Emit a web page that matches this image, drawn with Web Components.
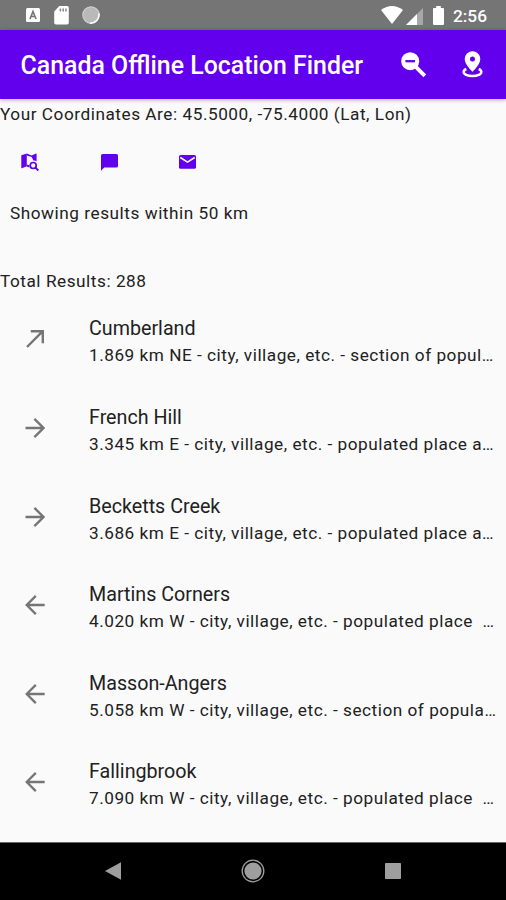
<!DOCTYPE html>
<html lang="en">
<head>
<meta charset="utf-8">
<title>Canada Offline Location Finder</title>
<style>
html, body { margin: 0; height: 100%; overflow: hidden; }
body { font-family: Roboto, "Noto Sans", sans-serif; color: #212121; background: #fafafa; }
</style>
</head>
<body>
<finder-app></finder-app>
<script>
const define = (name, html, setup) => customElements.define(name, class extends HTMLElement {
  constructor() {
    super();
    const t = document.createElement('template');
    t.innerHTML = html;
    this.attachShadow({ mode: 'open' }).append(t.content.cloneNode(true));
  }
  connectedCallback() { if (setup) setup(this); }
});

const glyphs = {
  keyboard: ['0 0 14 14', '<rect width="14" height="14" rx="1.5"/><path d="M4 11 7 3.5 10 11M5.2 8.5h3.6" fill="none" stroke="#757575" stroke-width="1.6"/>'],
  sdcard: ['0 0 15 19', '<path d="M5.3 0H13a1.8 1.8 0 0 1 1.8 1.8v15A1.8 1.8 0 0 1 13 18.6H2a1.8 1.8 0 0 1-1.8-1.8V5.5Z"/><path d="M5.6 2.6h1.6v3H5.6zM8.4 2.6H10v3H8.4zM11.2 2.6h1.5v3h-1.5z" fill="#8a8a8a"/>'],
  sync: ['0 0 18 18', '<circle cx="9" cy="9" r="8.2" fill="#b9b9b9" stroke="#cecece" stroke-width="1.2"/><path d="M16.8 7.5A8.3 8.3 0 0 1 7.8 17.2" fill="none" stroke="#fff" stroke-width="1.5"/>'],
  wifi: ['0 0 22 18', '<path d="M11 18 0 4Q11-3.8 22 4Z"/>'],
  signal: ['0 0 17 17', '<path d="M0 17 17 0v17Z" fill="#a8a8a8"/><path d="M0 17 11 6v11Z"/>'],
  battery: ['0 0 11 19', '<path d="M3.2 0h4.6v2H10q1 0 1 1v15q0 1-1 1H1q-1 0-1-1V3q0-1 1-1h2.2Z"/>'],
  zoomout: ['0 0 26 26', '<circle cx="9.2" cy="9.2" r="9"/><path d="m14.8 14.8 9 9" stroke="currentColor" stroke-width="3.9"/><path d="M4.4 9.2h9.6" stroke="#6200ee" stroke-width="2.3"/>'],
  pin: ['0 0 22 27', '<path fill-rule="evenodd" d="M10.5.3a7.8 7.8 0 0 1 7.8 7.8c0 5.8-7.8 12.7-7.8 12.7S2.7 13.9 2.7 8.1A7.8 7.8 0 0 1 10.5.3Zm0 5.3a2.5 2.5 0 1 0 0 5 2.5 2.5 0 0 0 0-5Z"/><path d="M4.3 18C2.4 18.8 1.7 19.6 1.7 20.9c0 2.4 3.8 4.2 8.8 4.2s8.8-1.8 8.8-4.2c0-1.3-.7-2.1-2.6-2.9" fill="none" stroke="currentColor" stroke-width="2.5"/>'],
  map: ['0 0 18 18', '<path d="M.3 2.2 5.8.6v12.6L.9 15.2q-.6.1-.6-.5Z"/><path d="m5.8.6 4.9 1.8L15 .6q.6-.1.6.5v7.1a5 5 0 0 0-3.2-.7L10.7 4 5.8 2.4ZM5.8 11.4l2.4.8.2 2.2-2.6-1Z"/><circle cx="12.2" cy="12.5" r="3" fill="none" stroke="currentColor" stroke-width="1.7"/><path d="m14.3 14.5 3 3" stroke="currentColor" stroke-width="1.9"/>'],
  chat: ['0 0 17 17', '<path d="M1.6 0h13.8Q17 0 17 1.6v10.3q0 1.6-1.6 1.6H3.3L0 16.7V1.6Q0 0 1.6 0Z"/>'],
  mail: ['0 0 17 14', '<path d="M1.6 0h13.8Q17 0 17 1.6v10.6q0 1.6-1.6 1.6H1.6Q0 13.8 0 12.2V1.6Q0 0 1.6 0Z"/><path d="m1.3 2.5 7.2 4.6 7.2-4.6" fill="none" stroke="#fafafa" stroke-width="1.7"/>'],
  ne: ['0 0 20 20', '<path d="M2 18 17.3 2.7M5.8 2.2h12v12" fill="none" stroke="currentColor" stroke-width="2.4"/>'],
  e: ['0 0 20 20', '<path d="M.5 10h18M9.4.9l9.1 9.1-9.1 9.1" fill="none" stroke="currentColor" stroke-width="2.3"/>'],
  w: ['0 0 20 20', '<path d="M19.7 10H1.7M10.8.9 1.7 10l9.1 9.1" fill="none" stroke="currentColor" stroke-width="2.3"/>'],
  back: ['0 0 16 18', '<path d="M0 9 16 .3v17.4Z"/>'],
  home: ['0 0 24 24', '<circle cx="12" cy="12" r="10.8" fill="none" stroke="currentColor" stroke-width="1.3"/><circle cx="12" cy="12" r="8.6"/>'],
  recent: ['0 0 16 16', '<rect width="16" height="16" rx=".7"/>']
};

define('ui-icon', `<style>:host{display:block;flex:none}svg{display:block;fill:currentColor}</style><div></div>`, el => {
  const [box, body] = glyphs[el.getAttribute('name')];
  const [, , w, h] = box.split(' ');
  el.shadowRoot.querySelector('div').innerHTML = `<svg width="${w}" height="${h}" viewBox="${box}">${body}</svg>`;
});

define('status-bar', `<style>
:host{display:flex;align-items:center;height:30px;padding:0 19px 0 26px;background:#757575;color:#fff;box-sizing:border-box}
.sd{margin-left:14px}.sync{margin-left:13px}.wifi{margin-left:auto}.sig{margin:3px 0 0 3px}.bat{margin-left:10px}
span{font-size:17.3px;font-weight:500;margin:2px 0 0 9px;line-height:20px}
</style><ui-icon name="keyboard"></ui-icon><ui-icon class="sd" name="sdcard"></ui-icon><ui-icon class="sync" name="sync"></ui-icon>
<ui-icon class="wifi" name="wifi"></ui-icon><ui-icon class="sig" name="signal"></ui-icon><ui-icon class="bat" name="battery"></ui-icon><span>2:56</span>`);

define('app-bar', `<style>
:host{display:flex;align-items:center;height:69px;padding:0 22px 0 20.5px;background:#6200ee;color:#fff;box-sizing:border-box;box-shadow:0 1px 4px rgba(0,0,0,.3);position:relative}
h1{font-size:24.9px;font-weight:500;margin:3px auto 0 0;line-height:30px;white-space:nowrap}
.p{margin-left:35px}
</style><h1><slot></slot></h1><ui-icon name="zoomout"></ui-icon><ui-icon class="p" name="pin"></ui-icon>`);

define('info-line', `<style>
:host{display:block;font-size:17.2px;line-height:20px;letter-spacing:.54px;white-space:nowrap}
</style><slot></slot>`);

define('share-actions', `<style>
:host{display:flex;align-items:center;height:18px;padding-left:21px;color:#6200ee;gap:61.5px}
</style><ui-icon name="map"></ui-icon><ui-icon name="chat"></ui-icon><ui-icon name="mail"></ui-icon>`);

define('place-row', `<style>
:host{display:flex;height:88.6px;box-sizing:border-box}
ui-icon{color:#757575;margin:25px 44px 0 25px}
.n{font-size:19.7px;line-height:24px;margin-top:13px;letter-spacing:0}
.d{font-size:17.2px;line-height:22px;margin-top:3px;letter-spacing:.52px;white-space:pre}
</style><div><div class="n"><slot name="title"></slot></div><div class="d"><slot></slot></div></div>`, el => {
  const icon = document.createElement('ui-icon');
  icon.setAttribute('name', el.getAttribute('direction'));
  el.shadowRoot.querySelector('style').after(icon);
});

define('nav-bar', `<style>
:host{display:flex;align-items:center;height:58.5px;background:#000;color:#9e9e9e;border-top:1px solid #666;box-sizing:border-box;padding:0 105px;justify-content:space-between}
</style><ui-icon name="back"></ui-icon><ui-icon name="home"></ui-icon><ui-icon name="recent"></ui-icon>`);

const rows = [
  ['ne', 'Cumberland', '1.869 km NE - city, village, etc. - section of popul…'],
  ['e', 'French Hill', '3.345 km E - city, village, etc. - populated place a…'],
  ['e', 'Becketts Creek', '3.686 km E - city, village, etc. - populated place a…'],
  ['w', 'Martins Corners', '4.020 km W - city, village, etc. - populated place  …'],
  ['w', 'Masson-Angers', '5.058 km W - city, village, etc. - section of popula…'],
  ['w', 'Fallingbrook', '7.090 km W - city, village, etc. - populated place  …']
];

define('finder-app', `<style>
:host{display:flex;flex-direction:column;height:900px;overflow:hidden}
main{flex:1;min-height:0;overflow:hidden;padding-top:5px}
share-actions{margin-top:29px}.range{margin:32px 0 0 10px}.total{margin-top:48px}.list{margin-top:13.35px}
</style><status-bar></status-bar><app-bar>Canada Offline Location Finder</app-bar>
<main><info-line>Your Coordinates Are: 45.5000, -75.4000 (Lat, Lon)</info-line>
<share-actions></share-actions>
<info-line class="range">Showing results within 50 km</info-line>
<info-line class="total">Total Results: 288</info-line>
<div class="list">${rows.map(([dir, n, d]) => `<place-row direction="${dir}"><span slot="title">${n}</span>${d}</place-row>`).join('')}</div></main>
<nav-bar></nav-bar>`);
</script>
</body>
</html>
